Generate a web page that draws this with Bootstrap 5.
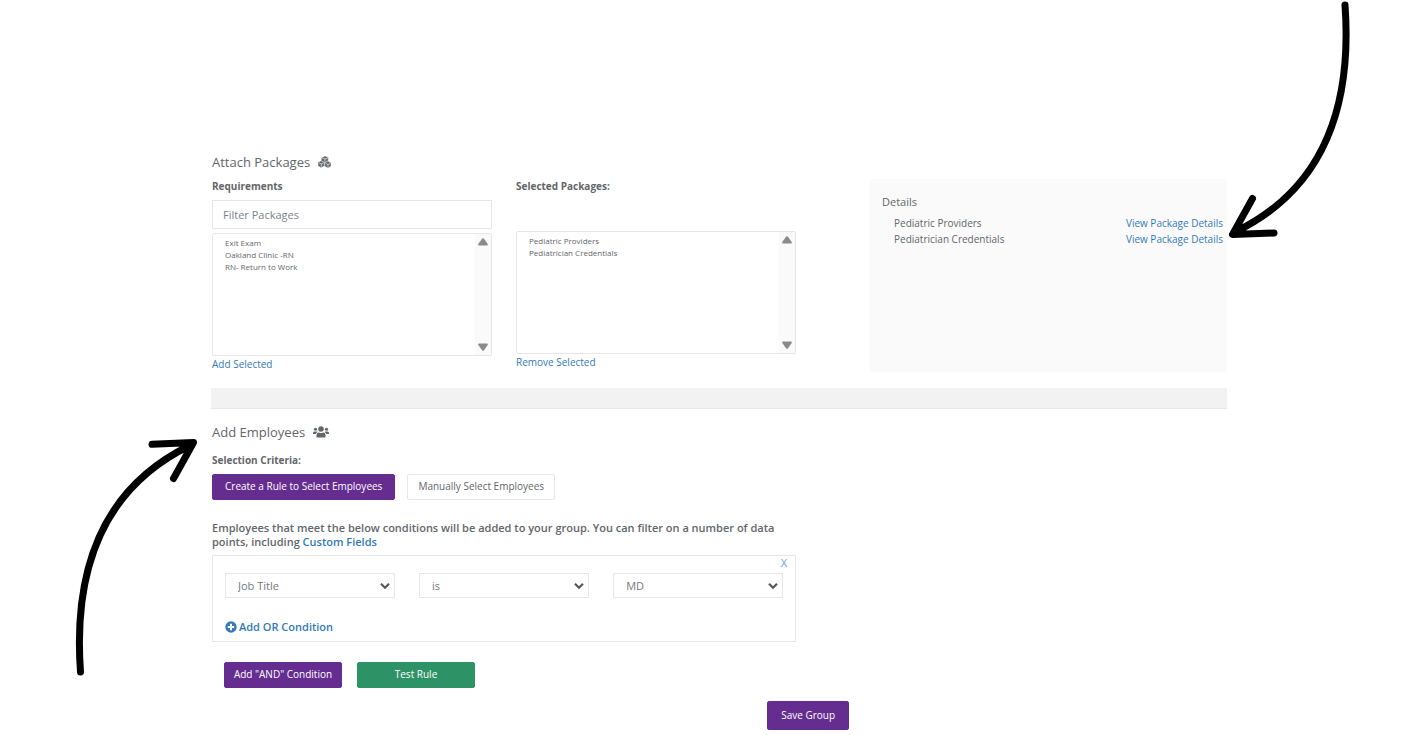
<!DOCTYPE html>
<html lang="en">
<head>
<meta charset="utf-8">
<meta name="viewport" content="width=device-width, initial-scale=1">
<title>Group packages and employees</title>
<link href="https://cdn.jsdelivr.net/npm/bootstrap@5.3.0/dist/css/bootstrap.min.css" rel="stylesheet">
<style>
  :root { --ink: #63666a; --line: #e6e6e6; --link: #337ab7; --brand: #662d91; --ok: #2d9366; }
  body { font-family: "Open Sans", sans-serif; font-size: 10px; line-height: 16px; color: var(--ink); }
  a { color: var(--link); text-decoration: none; }
  a:hover { text-decoration: underline; }

  .pointer-start { flex: 0 0 211px; padding: 432px 7px 0 0; }
  .pointer-end { flex: 0 0 199px; }
  .pointer path { fill: none; stroke: #000; stroke-width: 7px; stroke-linecap: round; stroke-linejoin: round; }

  .page-main { padding-top: 152px; }
  .attach-grid { display: grid; grid-template-columns: minmax(0, 584fr) minmax(0, 358fr); column-gap: 73px; padding-left: 1px; }
  .pair-grid, .triple-grid { display: grid; grid-template-columns: repeat(2, minmax(0, 1fr)); column-gap: 24px; }
  .pair-grid { margin-top: 6px; }
  .triple-grid { grid-template-columns: repeat(3, minmax(0, 1fr)); }
  .section-title { font-size: 13px; line-height: 20px; font-weight: 500; margin: 0; }
  .field-label { display: block; font-weight: 700; margin-bottom: 6px; }

  .filter-input { font-size: 11px; line-height: 17px; padding: 5px 10px; border: 1px solid var(--line); border-radius: 0; color: var(--ink); margin-bottom: 4px; }
  .filter-input::placeholder { color: #7d8288; opacity: 1; }
  .pick-list { display: block; width: 100%; height: 123px; border: 1px solid var(--line); background: #fff; padding: 3px 12px; font-size: 8px; color: var(--ink); overflow: hidden; outline: 0; }
  .pick-list option { padding: 0; height: 12px; min-height: 12px; line-height: 12px; }
  .scroll-track { top: 1px; right: 1px; bottom: 1px; width: 16px; background: #fafafa; padding: 4px 0; pointer-events: none; }
  .selected-col { padding-top: 31px; }

  .details-col { padding-top: 27px; }
  .details-card { background: #fafafa; border-radius: 6px 0 0 6px; padding: 14px 4px 0 13px; height: 193px; }
  .details-title { font-size: 11px; line-height: 18px; margin: 0 0 4px; font-weight: 500; }
  .divider-band { height: 21px; margin-top: 16px; background: #f2f2f2; border-bottom: 1px solid #e9e9e9; }

  .btn { --bs-btn-font-size: 10px; --bs-btn-line-height: 16px; --bs-btn-padding-y: 4px; --bs-btn-padding-x: 10px; --bs-btn-border-radius: 2px; --bs-btn-font-weight: 500; padding-top: 3px; padding-bottom: 5px; }
  .btn-brand { --bs-btn-color: #fff; --bs-btn-bg: var(--brand); --bs-btn-border-color: var(--brand); --bs-btn-hover-color: #fff; --bs-btn-hover-bg: #54247a; }
  .btn-plain { --bs-btn-color: var(--ink); --bs-btn-bg: #fff; --bs-btn-border-color: var(--line); --bs-btn-hover-bg: #f5f5f5; }
  .btn-ok { --bs-btn-color: #fff; --bs-btn-bg: var(--ok); --bs-btn-border-color: var(--ok); --bs-btn-hover-color: #fff; --bs-btn-hover-bg: #247a54; }
  .btn-mode { --bs-btn-padding-x: 12px; }
  .btn-rule { width: 118px; }
  .btn-save { padding-top: 5px; padding-bottom: 6px; width: 82px; }

  .employees { width: calc(57.5% + 1px); padding-left: 1px; margin-top: 13px; }
  .criteria-label { font-weight: 700; margin: 10px 0 6px; }
  .mode-row { gap: 12px; }
  .intro { font-size: 11px; line-height: 14px; font-weight: 600; margin: 21px 0 6px; }
  .rule-box { border: 1px solid var(--line); padding: 17px 12px 5px; height: 87px; }
  .rule-remove { top: 0; right: 8px; line-height: 14px; font-size: 11px; border: 0; background: none; padding: 0; color: #6f9fd0; }
  .rule-select { font-size: 11px; line-height: 17px; padding: 3px 24px 3px 12px; border: 1px solid var(--line); border-radius: 0; color: #75797e; background-position: right 4px center; background-size: 10px 8px;
    background-image: url("data:image/svg+xml,%3csvg xmlns='http://www.w3.org/2000/svg' viewBox='0 0 10 8'%3e%3cpath d='M1 1.8 5 5.800 9 1.800' fill='none' stroke='%2355585c' stroke-width='2.200'/%3e%3c/svg%3e"); }
  .add-or { font-size: 11px; line-height: 16px; font-weight: 600; margin-top: 21px; gap: 2px; }
  .rule-actions { padding-left: 12px; margin-top: 20px; gap: 15px; }
  .save-row { width: calc(57.5% + 54px); margin-top: 13px; padding-bottom: 4px; }
</style>
</head>
<body>
<div class="d-flex align-items-start">
  <div class="pointer pointer-start d-flex justify-content-end">
    <svg width="134" height="250" viewBox="70 432 134 250" aria-hidden="true">
      <path d="M80.500 672C74 582 94 492 190 445.500M152 444.300 193.500 442.500 173.500 478.500"/>
    </svg>
  </div>

  <main class="page-main flex-grow-1">
    <section class="attach-grid">
      <div>
        <h2 class="section-title d-flex align-items-center">Attach Packages
          <svg class="ms-2" width="13" height="12" viewBox="0 0 26 24" aria-hidden="true">
            <g fill="#63666a" stroke="#fff" stroke-width=".8" stroke-linejoin="round">
              <path d="M14 0 21 3 20 10.500 13 13 6 10 7.500 3Z"/>
              <path d="M6 9.500 13 13 12.500 20 6 23.500 0 19.500V12.500Z"/>
              <path d="M20 10 26 14V20.500L20 24 13 20.500V13.500Z"/>
            </g>
            <path d="M9 4 14 6 19.500 4M14 6 13.500 11M2 13.500 6.500 16 11.500 13.800M6.500 16V21.500M15 14.800 20 17 24.500 15M20 17V22" fill="none" stroke="#fff" stroke-width="1.300"/>
          </svg>
        </h2>
        <div class="pair-grid">
          <div>
            <label class="field-label" for="filter">Requirements</label>
            <input class="form-control filter-input" id="filter" type="text" placeholder="Filter Packages">
            <div class="position-relative">
              <select class="pick-list" multiple aria-label="Available packages">
                <option>Exit Exam</option>
                <option>Oakland Clinic -RN</option>
                <option>RN- Return to Work</option>
              </select>
              <div class="scroll-track position-absolute d-flex flex-column justify-content-between align-items-center">
                <svg width="10" height="8" viewBox="0 0 10 8"><path d="M4 .8Q5-.2 6 .8L9.700 6Q10.200 7.500 9 7.500H1Q-.2 7.500.3 6Z" fill="#8a8a8a"/></svg>
                <svg width="10" height="8" viewBox="0 0 10 8"><path d="M4 7.200Q5 8.200 6 7.200L9.700 2Q10.200.5 9 .5H1Q-.2.5.3 2Z" fill="#8a8a8a"/></svg>
              </div>
            </div>
            <a href="#">Add Selected</a>
          </div>
          <div>
            <label class="field-label" for="chosen">Selected Packages:</label>
            <div class="selected-col">
              <div class="position-relative">
                <select class="pick-list" id="chosen" multiple>
                  <option>Pediatric Providers</option>
                  <option>Pediatrician Credentials</option>
                </select>
                <div class="scroll-track position-absolute d-flex flex-column justify-content-between align-items-center">
                  <svg width="10" height="8" viewBox="0 0 10 8"><path d="M4 .8Q5-.2 6 .8L9.700 6Q10.200 7.500 9 7.500H1Q-.2 7.500.3 6Z" fill="#8a8a8a"/></svg>
                  <svg width="10" height="8" viewBox="0 0 10 8"><path d="M4 7.200Q5 8.200 6 7.200L9.700 2Q10.200.5 9 .5H1Q-.2.5.3 2Z" fill="#8a8a8a"/></svg>
                </div>
              </div>
              <a href="#">Remove Selected</a>
            </div>
          </div>
        </div>
      </div>
      <div class="details-col">
        <div class="details-card">
          <h3 class="details-title">Details</h3>
          <div class="d-flex justify-content-between ps-2 ms-1"><span>Pediatric Providers</span><a href="#">View Package Details</a></div>
          <div class="d-flex justify-content-between ps-2 ms-1"><span>Pediatrician Credentials</span><a href="#">View Package Details</a></div>
        </div>
      </div>
    </section>

    <div class="divider-band"></div>

    <section class="employees">
      <h2 class="section-title d-flex align-items-center">Add Employees
        <svg class="ms-2" width="16" height="12" viewBox="0 0 32 24" fill="#63666a" aria-hidden="true">
          <circle cx="16" cy="6" r="5.500"/><path d="M7 23V18.500Q7 13 12 13Q16 15 20 13Q25 13 25 18.500V23Z"/>
          <circle cx="5" cy="6.500" r="3.200"/><path d="M0 16V14Q0 11 3 11H6.500Q8.500 11 9 12Q6 13.500 5.500 16Z"/>
          <circle cx="27" cy="6.500" r="3.200"/><path d="M32 16V14Q32 11 29 11H25.500Q23.500 11 23 12Q26 13.500 26.500 16Z"/>
        </svg>
      </h2>
      <div class="criteria-label">Selection Criteria:</div>
      <div class="mode-row d-flex">
        <button class="btn btn-brand btn-mode" type="button">Create a Rule to Select Employees</button>
        <button class="btn btn-plain" type="button">Manually Select Employees</button>
      </div>
      <p class="intro">Employees that meet the below conditions will be added to your group. You can filter on a number of data points, including <a href="#">Custom Fields</a></p>

      <div class="rule-box position-relative">
        <button class="rule-remove position-absolute" type="button" aria-label="Remove condition">X</button>
        <div class="triple-grid">
          <select class="form-select rule-select" aria-label="Field"><option>Job Title</option></select>
          <select class="form-select rule-select" aria-label="Operator"><option>is</option></select>
          <select class="form-select rule-select" aria-label="Value"><option>MD</option></select>
        </div>
        <a class="add-or d-flex align-items-center" href="#">
          <svg width="12" height="12" viewBox="0 0 12 12" aria-hidden="true"><circle cx="6" cy="6" r="5.700" fill="#337ab7"/><path d="M6 2.800V9.200M2.800 6H9.200" stroke="#fff" stroke-width="2"/></svg>
          <span>Add OR Condition</span>
        </a>
      </div>
      <div class="rule-actions d-flex">
        <button class="btn btn-brand btn-rule px-0" type="button">Add "AND" Condition</button>
        <button class="btn btn-ok btn-rule" type="button">Test Rule</button>
      </div>
    </section>
    <div class="save-row text-end"><button class="btn btn-brand btn-save px-0" type="button">Save Group</button></div>
  </main>

  <div class="pointer pointer-end">
    <svg width="134" height="242" viewBox="1227 0 134 242" aria-hidden="true">
      <path d="M1345 5C1351.500 95 1331.500 185 1236 231.500M1252.500 198.500 1232.500 234.500 1274 233"/>
    </svg>
  </div>
</div>
<script src="https://cdn.jsdelivr.net/npm/bootstrap@5.3.0/dist/js/bootstrap.bundle.min.js"></script>
</body>
</html>
